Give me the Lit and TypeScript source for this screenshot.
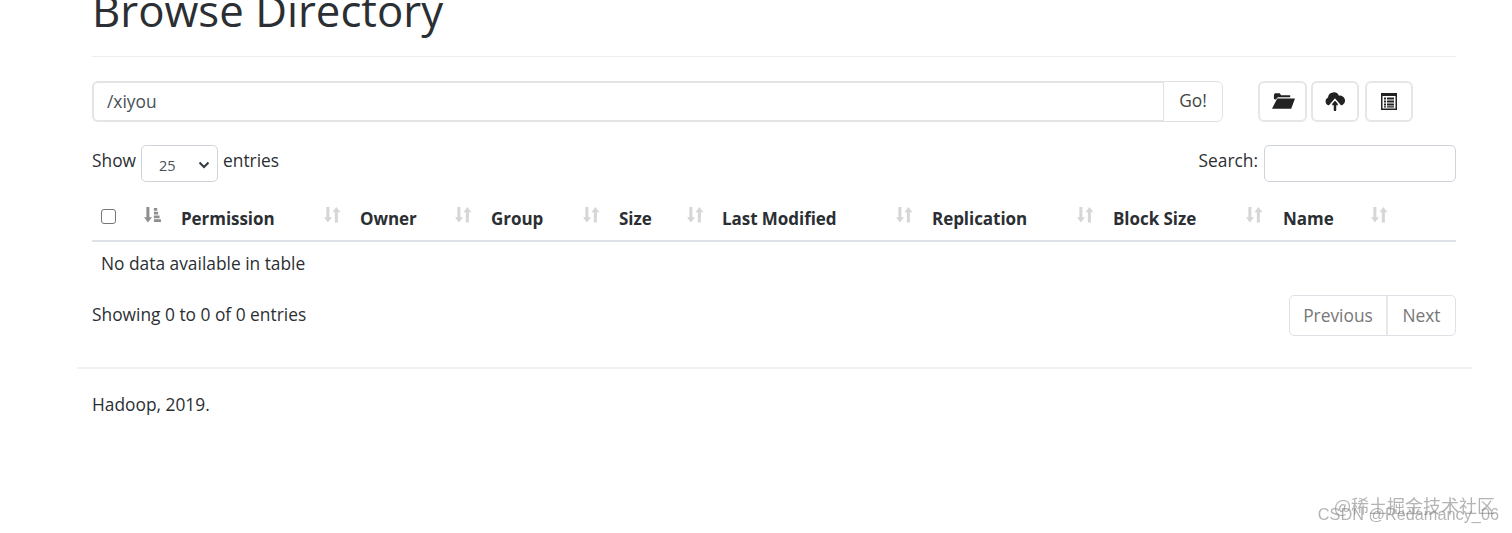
import { LitElement, html, css, svg } from "lit";
import { customElement } from "lit/decorators.js";

const cols = [
  { label: "Permission", w: 179, gap: 143 },
  { label: "Owner", w: 131, gap: 95 },
  { label: "Group", w: 128, gap: 92 },
  { label: "Size", w: 103, gap: 68 },
  { label: "Last Modified", w: 210, gap: 174 },
  { label: "Replication", w: 181, gap: 145 },
  { label: "Block Size", w: 170, gap: 133 },
  { label: "Name", w: 182, gap: 88 },
];

const sortIcon = (active: boolean) => svg`<svg class="sort ${active ? "active" : ""}" width="17" height="16" viewBox="0 0 18 17" aria-hidden="true">
  <path d="M2.500 0h3.200v11H8.500l-4.400 5.500L0 11h2.500z" fill="currentColor"/>
  ${active
    ? svg`<path d="M10.500 1h3.500v3h-3.500zM10.500 5h4.500v3h-4.500zM10.500 9h6v3h-6zM10.500 13h7.500v3h-7.500z" fill="currentColor"/>`
    : svg`<path d="M11.500 16.500h3.200V5.500h2.800L13.100 0 9 5.500h2.500z" fill="currentColor"/>`}
</svg>`;

@customElement("app-root")
export class AppRoot extends LitElement {
  static styles = css`
    :host { display: block; height: 533px; overflow: hidden; position: relative; background: #fff; color: #2b2f33;
      font-family: "Open Sans", "Noto Sans", sans-serif; font-size: 17.350px; }
    * { box-sizing: border-box; }
    .container { padding: 0 15px 0 15px; margin: 0 40px 0 77px; width: 1394px; }
    .header { height: 57px; border-bottom: 1px solid #eee; overflow: hidden; }
    h1 { margin: -17px 0 0; font-size: 43.750px; font-weight: 400; line-height: 54px; color: #2b2f33; }
    .toolbar { display: flex; margin-top: 24px; height: 41px; }
    .path { display: flex; width: 1131px; }
    .path-input { flex: 1; display: flex; align-items: center; padding: 0 0 2px 13px; border: 2px solid #e2e4e6; border-right: 0; border-radius: 6px 0 0 6px; color: #495057; }
    .go { width: 60px; display: flex; align-items: center; justify-content: center; padding-bottom: 3px; border: 1px solid #dfe2e5; border-radius: 0 6px 6px 0; color: #444; }
    .tools { display: flex; gap: 4px; margin-left: 35px; }
    .tool { width: 48px; display: flex; align-items: center; justify-content: center; padding-bottom: 1px; border: 2px solid #e6e6e6; border-radius: 6px; color: #222; }
    .tool:first-child { width: 49px; padding-left: 2px; }
    .tool + .tool + .tool { margin-left: 2px; }
    .controls { display: flex; justify-content: space-between; align-items: center; margin-top: 23px; height: 37px; }
    .group { display: flex; align-items: flex-start; gap: 5px; line-height: 31px; }
    .group.right { gap: 6px; }
    .select { width: 77px; height: 37px; border: 1px solid #ced4da; border-radius: 5px; display: flex; align-items: center; justify-content: space-between; padding: 3px 7px 0 17px; font-size: 14.500px; color: #495057; }
    .search { width: 192px; height: 37px; border: 1px solid #ced4da; border-radius: 5px; }
    table { border-collapse: collapse; table-layout: fixed; width: 1364px; margin-top: 10px; }
    th { height: 49px; padding: 0 0 0 9px; text-align: left; border-bottom: 2px solid #dee2e6; font-weight: 700; font-size: 17px; letter-spacing: -.05px; color: #2b2f33; white-space: nowrap; vertical-align: middle; }
    .thc { display: flex; align-items: center; padding-top: 4px; }
    .thc > span { display: block; }
    .sort { display: block; color: #d6d6d6; margin-top: -7px; flex: none; }
    .sort.active { color: #8f8f8f; }
    .check { width: 15px; height: 15px; border: 1.500px solid #767676; border-radius: 3px; }
    .first { display: flex; align-items: center; gap: 28px; }
    .first .sort { margin-top: -3px; }
    td { height: 42px; padding: 0 0 0 9px; color: #2b2f33; }
    .foot { display: flex; justify-content: space-between; align-items: flex-start; margin-top: 12px; height: 41px; line-height: 39px; }
    .pager { display: flex; height: 41px; border: 1px solid #dee2e6; border-radius: 5px; color: #777; width: 167px; }
    .pager span { display: flex; align-items: center; justify-content: center; }
    .prev { width: 98px; border-right: 2px solid #e6e8ea; }
    .next { flex: 1; }
    .rule { margin-top: 31px; margin-left: 77px; width: 1395px; border-top: 2px solid #f0f0f0; }
    .copy { margin: 23px 0 0 92px; line-height: 24px; color: #2b2f33; }
    .mark { position: absolute; color: #777; opacity: .55; filter: blur(.5px); white-space: nowrap; line-height: 20px; }
    .m1 { right: 17px; top: 492px; font: 18px "Noto Sans CJK SC", sans-serif; }
    .m2 { right: 13px; top: 505px; font: 16.300px "Liberation Sans", sans-serif; }
  `;

  render() {
    return html`
      <div class="container">
        <div class="header"><h1>Browse Directory</h1></div>
        <div class="toolbar">
          <div class="path">
            <div class="path-input">/xiyou</div>
            <div class="go">Go!</div>
          </div>
          <div class="tools">
            <div class="tool">
              <svg width="23" height="18" viewBox="0 0 24 18"><path fill="currentColor" d="M2 7V2.500L3 1h5l1.500 2H19v2H6L4 7.500zM5.500 6.500H24L20 17H0z"/></svg>
            </div>
            <div class="tool">
              <svg width="20" height="19" viewBox="0 0 20 19">
                <path fill="currentColor" d="M4.500 13.500A4.200 4.200 0 0 1 3 5.500 5.800 5.800 0 0 1 14 3.700 4.900 4.900 0 0 1 16 13.500z"/>
                <path fill="currentColor" stroke="#fff" stroke-width="1.500" d="M10 7.500l5 5.800h-3V19H8v-5.700H5z"/>
                <path fill="currentColor" d="M10 9.500l3.200 3.800h-2.200V19H9v-5.700H6.800z"/>
              </svg>
            </div>
            <div class="tool">
              <svg width="18" height="17" viewBox="0 0 18 17"><path fill="currentColor" fill-rule="evenodd" d="M1 0h16v17H1zM2.500 3v12.500h13V3z"/><path fill="currentColor" d="M4 4.500h2v2H4zM7 4.500h7v2H7zM4 7.500h2v2H4zM7 7.500h7v2H7zM4 10.500h2v2H4zM7 10.500h7v2H7zM4 13.200h2v1.300H4zM7 13.200h7v1.300H7z"/></svg>
            </div>
          </div>
        </div>
        <div class="controls">
          <div class="group">
            <span>Show</span>
            <div class="select"><span>25</span>
              <svg width="12" height="8" viewBox="0 0 12 8"><path d="M1.500 1.500L6 6l4.500-4.500" fill="none" stroke="#343a40" stroke-width="2"/></svg>
            </div>
            <span>entries</span>
          </div>
          <div class="group right"><span>Search:</span><div class="search"></div></div>
        </div>
        <table>
          <colgroup><col style="width:80px" />${cols.map((c) => html`<col style="width:${c.w}px" />`)}</colgroup>
          <thead><tr>
            <th><div class="first"><div class="check"></div>${sortIcon(true)}</div></th>
            ${cols.map((c) => html`<th><div class="thc"><span style="width:${c.gap}px">${c.label}</span>${sortIcon(false)}</div></th>`)}
          </tr></thead>
          <tbody><tr><td colspan="9">No data available in table</td></tr></tbody>
        </table>
        <div class="foot">
          <span>Showing 0 to 0 of 0 entries</span>
          <div class="pager"><span class="prev">Previous</span><span class="next">Next</span></div>
        </div>
      </div>
      <div class="rule"></div>
      <div class="copy">Hadoop, 2019.</div>
      <div class="mark m1">@稀土掘金技术社区</div>
      <div class="mark m2">CSDN @Redamancy_06</div>
    `;
  }
}
